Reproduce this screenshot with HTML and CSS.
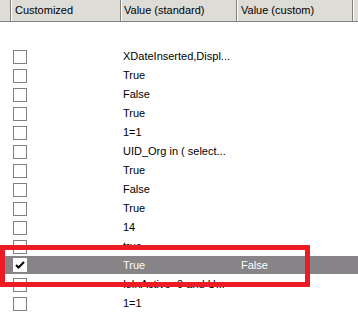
FILE: index.html
```html
<!DOCTYPE html>
<html>
	<head>
		<meta charset="utf-8"/>
		<link rel="stylesheet" href="styles.css">
		<title>Customized values</title>
	</head>
	<body>
		<div id="grid-container">
			<div class="header">
				<div class="hcell stub"></div>
				<div class="hcell col-check">Customized</div>
				<div class="hcell col-std">Value (standard)</div>
				<div class="hcell col-custom">Value (custom)</div>
				<div class="hcell rest"></div>
			</div>
			<div class="rows">
				<div class="row"><div class="check"><span class="box"></span></div><div class="std">XDateInserted,Displ...</div><div class="custom"></div></div>
				<div class="row"><div class="check"><span class="box"></span></div><div class="std">True</div><div class="custom"></div></div>
				<div class="row"><div class="check"><span class="box"></span></div><div class="std">False</div><div class="custom"></div></div>
				<div class="row"><div class="check"><span class="box"></span></div><div class="std">True</div><div class="custom"></div></div>
				<div class="row"><div class="check"><span class="box"></span></div><div class="std">1=1</div><div class="custom"></div></div>
				<div class="row"><div class="check"><span class="box"></span></div><div class="std">UID_Org in ( select...</div><div class="custom"></div></div>
				<div class="row"><div class="check"><span class="box"></span></div><div class="std">True</div><div class="custom"></div></div>
				<div class="row"><div class="check"><span class="box"></span></div><div class="std">False</div><div class="custom"></div></div>
				<div class="row"><div class="check"><span class="box"></span></div><div class="std">True</div><div class="custom"></div></div>
				<div class="row"><div class="check"><span class="box"></span></div><div class="std">14</div><div class="custom"></div></div>
				<div class="row"><div class="check"><span class="box"></span></div><div class="std">true</div><div class="custom"></div></div>
				<div class="row selected"><div class="check"><span class="box checked"><svg width="12" height="12" viewBox="0 0 12 12"><polyline points="2,6 4.5,8.5 10,3" fill="none" stroke="#000" stroke-width="2"/></svg></span></div><div class="std">True</div><div class="custom">False</div></div>
				<div class="row"><div class="check"><span class="box"></span></div><div class="std">IsInActive=0 and U...</div><div class="custom"></div></div>
				<div class="row"><div class="check"><span class="box"></span></div><div class="std">1=1</div><div class="custom"></div></div>
			</div>
			<div class="marker"></div>
		</div>
	</body>
</html>
```
FILE: styles.css
```css
body {
	margin: 0;
	background-color: #ffffff;
	font-family: "Liberation Sans", Arial, sans-serif;
	font-size: 11px;
	color: #000000;
	overflow: hidden;
}
#grid-container {
	position: relative;
	width: 358px;
	height: 312px;
}
.header {
	display: flex;
	height: 21px;
	background-color: #dedcd7;
	border-bottom: 1px solid #808080;
}
.hcell {
	height: 21px;
	line-height: 21px;
	border-right: 1px solid #808080;
	box-shadow: inset 1px 0 0 #ffffff;
	padding-left: 4px;
	box-sizing: border-box;
	white-space: nowrap;
}
.stub {
	width: 11px;
	box-shadow: none;
}
.col-check {
	width: 110px;
}
.col-std {
	width: 116px;
	padding-left: 3px;
}
.col-custom {
	width: 116px;
}
.rest {
	flex: 1;
	border-right: none;
}
.rows {
	padding-top: 25px;
}
.row {
	display: grid;
	grid-template-columns: 121px 116px 1fr;
	height: 19px;
	line-height: 18px;
	white-space: nowrap;
}
.check {
	display: flex;
	align-items: center;
	padding-left: 13px;
}
.box {
	display: inline-block;
	width: 14px;
	height: 14px;
	box-sizing: border-box;
	border: 1px solid #808080;
	background-color: #ffffff;
}
.box.checked {
	border-color: #ffffff;
}
.box svg {
	display: block;
}
.std {
	padding-left: 2px;
}
.custom {
	padding-left: 4px;
}
.selected {
	background-color: #868486;
	color: #ffffff;
	height: 18px;
	margin-bottom: 1px;
}
.marker {
	position: absolute;
	left: 0;
	top: 245px;
	width: 310px;
	height: 42px;
	box-sizing: border-box;
	border: 5px solid #ed1c24;
}
```
